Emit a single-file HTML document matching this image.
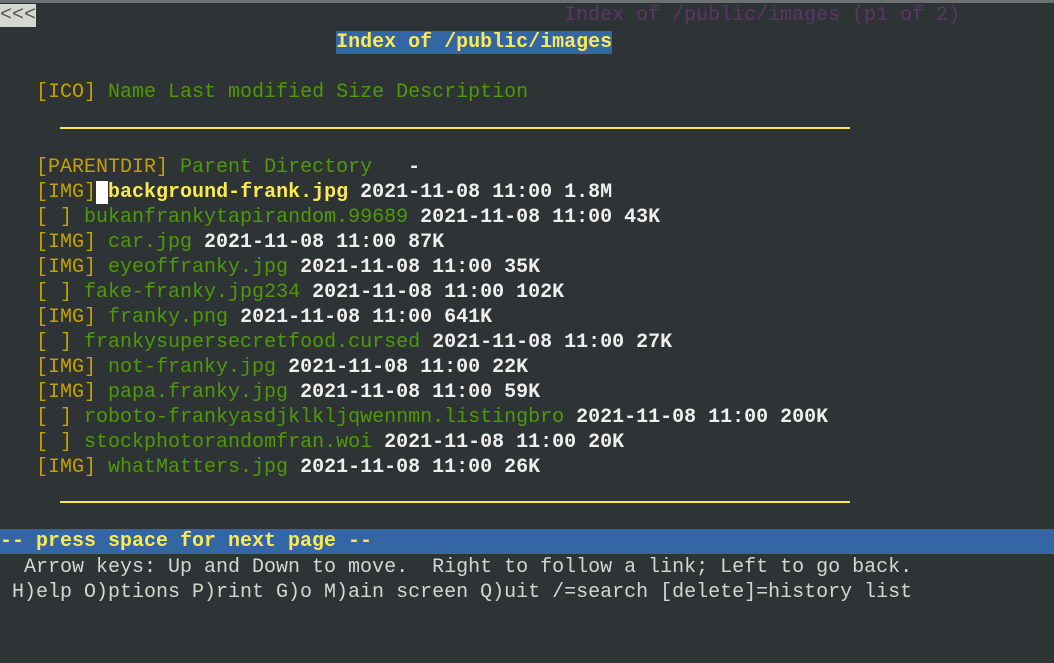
<!DOCTYPE html>
<html><head><meta charset="utf-8"><style>
html,body{margin:0;padding:0;width:1054px;height:663px;background:#2e3436;overflow:hidden}
body{border-top:3px solid #6c7073;box-sizing:border-box;position:relative}
.l{position:absolute;left:0;height:25px;line-height:25px;white-space:pre;font-family:"Liberation Mono",monospace;font-size:20px;color:#d3d7cf;margin-top:2px}
.o{color:#c4a000}.g{color:#4e9a06}.w{color:#eeeeec;font-weight:bold}.y{color:#fce94f;font-weight:bold}
.p{color:#5c3566}
.hr{position:absolute;left:60px;width:790px;height:2px;background:#fce94f}
</style></head><body>
<div class="l" style="top:0;margin-top:0"><span style="background:#d3d7cf;color:#555">&lt;&lt;&lt;</span>                                            <span class="p">Index of /public/images (p1 of 2)</span></div>
<div class="l" style="top:25px">                            <span class="y" style="background:#3465a4">Index of /public/images</span></div>
<div class="l" style="top:75px">   <span class="o">[ICO]</span><span class="g"> Name Last modified Size Description</span></div>
<div class="hr" style="top:124px"></div>
<div class="l" style="top:150px">   <span class="o">[PARENTDIR]</span><span class="g"> Parent Directory</span>   <span class="w">-</span></div>
<div class="l" style="top:175px">   <span class="o">[IMG]</span><span style="background:#fff"> </span><span class="y">background-frank.jpg</span><span class="w"> 2021-11-08 11:00 1.8M</span></div>
<div class="l" style="top:200px">   <span class="o">[ ]</span><span class="g"> bukanfrankytapirandom.99689</span><span class="w"> 2021-11-08 11:00 43K</span></div>
<div class="l" style="top:225px">   <span class="o">[IMG]</span><span class="g"> car.jpg</span><span class="w"> 2021-11-08 11:00 87K</span></div>
<div class="l" style="top:250px">   <span class="o">[IMG]</span><span class="g"> eyeoffranky.jpg</span><span class="w"> 2021-11-08 11:00 35K</span></div>
<div class="l" style="top:275px">   <span class="o">[ ]</span><span class="g"> fake-franky.jpg234</span><span class="w"> 2021-11-08 11:00 102K</span></div>
<div class="l" style="top:300px">   <span class="o">[IMG]</span><span class="g"> franky.png</span><span class="w"> 2021-11-08 11:00 641K</span></div>
<div class="l" style="top:325px">   <span class="o">[ ]</span><span class="g"> frankysupersecretfood.cursed</span><span class="w"> 2021-11-08 11:00 27K</span></div>
<div class="l" style="top:350px">   <span class="o">[IMG]</span><span class="g"> not-franky.jpg</span><span class="w"> 2021-11-08 11:00 22K</span></div>
<div class="l" style="top:375px">   <span class="o">[IMG]</span><span class="g"> papa.franky.jpg</span><span class="w"> 2021-11-08 11:00 59K</span></div>
<div class="l" style="top:400px">   <span class="o">[ ]</span><span class="g"> roboto-frankyasdjklkljqwennmn.listingbro</span><span class="w"> 2021-11-08 11:00 200K</span></div>
<div class="l" style="top:425px">   <span class="o">[ ]</span><span class="g"> stockphotorandomfran.woi</span><span class="w"> 2021-11-08 11:00 20K</span></div>
<div class="l" style="top:450px">   <span class="o">[IMG]</span><span class="g"> whatMatters.jpg</span><span class="w"> 2021-11-08 11:00 26K</span></div>
<div class="hr" style="top:498px"></div>
<div class="l" style="top:526px;margin-top:0;width:1054px;background:#3465a4"><span class="y">-- press space for next page --</span></div>
<div class="l" style="top:550px">  Arrow keys: Up and Down to move.  Right to follow a link; Left to go back.</div>
<div class="l" style="top:575px"> H)elp O)ptions P)rint G)o M)ain screen Q)uit /=search [delete]=history list</div>
</body></html>
